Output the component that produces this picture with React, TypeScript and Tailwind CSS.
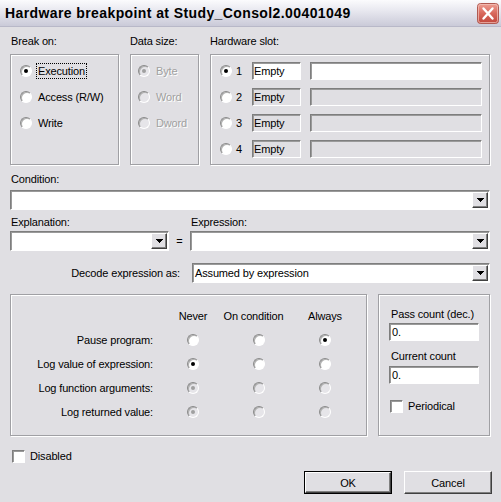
import React from "react";

const sunk =
  "border border-t-[#7e7e7e] border-l-[#7e7e7e] border-b-white border-r-white shadow-[inset_1px_1px_0_#9a9a9a]";
const groupBox =
  "border border-[#a0a0a4] shadow-[inset_1px_1px_0_#fff,1px_1px_0_#fff]";
const raised =
  "bg-[#e0dfe3] border border-t-white border-l-white border-r-[#404040] border-b-[#404040] shadow-[inset_-1px_-1px_0_#808080]";
const disabledText = "text-[#a0a0a0] [text-shadow:1px_1px_0_#fff]";

function Radio({ checked = false, disabled = false }: { checked?: boolean; disabled?: boolean }) {
  return (
    <span
      className={`relative inline-block w-[12px] h-[12px] shrink-0 rounded-full border border-t-[#8a8a8a] border-l-[#8a8a8a] border-r-white border-b-white shadow-[inset_1px_1px_0_#b0b0b0] ${
        disabled ? "bg-[#e6e5e9]" : "bg-white"
      }`}
    >
      {checked && (
        <span
          className={`absolute left-[3px] top-[3px] w-[4px] h-[4px] rounded-full ${
            disabled ? "bg-[#a0a0a0]" : "bg-black"
          }`}
        />
      )}
    </span>
  );
}

function Check() {
  return <span className={`inline-block w-[13px] h-[13px] shrink-0 bg-white ${sunk}`} />;
}

function DropBtn() {
  return (
    <div className={`w-[16px] h-[16px] mr-[1px] shrink-0 flex items-center justify-center ${raised}`}>
      <svg width="7" height="4" viewBox="0 0 7 4" shapeRendering="crispEdges">
        <rect x="0" y="0" width="7" height="1" fill="#000" />
        <rect x="1" y="1" width="5" height="1" fill="#000" />
        <rect x="2" y="2" width="3" height="1" fill="#000" />
        <rect x="3" y="3" width="1" height="1" fill="#000" />
      </svg>
    </div>
  );
}

function Combo({ className = "", text = "" }: { className?: string; text?: string }) {
  return (
    <div className={`${sunk} bg-white h-[20px] flex items-center ${className}`}>
      <span className="flex-1 pl-[2px] whitespace-nowrap overflow-hidden">{text}</span>
      <DropBtn />
    </div>
  );
}

function CloseBtn() {
  return (
    <svg width="22" height="21" viewBox="0 0 22 21">
      <defs>
        <linearGradient id="cg" x1="0" y1="0" x2="0" y2="1">
          <stop offset="0" stopColor="#eea196" />
          <stop offset="0.5" stopColor="#d8685c" />
          <stop offset="1" stopColor="#c0463c" />
        </linearGradient>
      </defs>
      <rect x="0.5" y="0.5" width="21" height="20" rx="3" fill="url(#cg)" stroke="#b05a52" />
      <rect x="1.5" y="1.5" width="19" height="18" rx="2" fill="none" stroke="#f3c4bc" strokeOpacity="0.7" />
      <path d="M6.5 5.5 L15.5 15.5 M15.5 5.5 L6.5 15.5" stroke="#fff" strokeWidth="2.4" strokeLinecap="round" />
    </svg>
  );
}

function SlotRow({ n, active }: { n: number; active: boolean }) {
  const bg = active ? "bg-white" : "bg-[#e0dfe3]";
  return (
    <div className="h-[26px] flex items-center">
      <Radio checked={active} />
      <span className="ml-[4px] w-[16px]">{n}</span>
      <div className={`${sunk} ${bg} w-[49px] h-[18px] flex items-center pl-[1px]`}>Empty</div>
      <div className={`${sunk} ${bg} w-[172px] h-[18px] ml-[9px]`} />
    </div>
  );
}

function OptRow({
  label,
  checked,
  disabled = false,
  focused = false,
}: {
  label: string;
  checked?: boolean;
  disabled?: boolean;
  focused?: boolean;
}) {
  return (
    <div className="h-[26px] flex items-center">
      <Radio checked={checked} disabled={disabled} />
      <span
        className={`ml-[4px] px-[1px] leading-[14px] border border-dotted ${
          focused ? "border-black" : "border-transparent"
        } ${disabled ? disabledText : ""}`}
      >
        {label}
      </span>
    </div>
  );
}

function ActRow({ label, sel, dis }: { label: string; sel: number; dis: boolean }) {
  return (
    <div className="h-[24px] flex items-center">
      <span className="w-[142px] text-right">{label}</span>
      <div className="w-[80px] flex justify-center">
        <Radio checked={sel === 0} disabled={dis} />
      </div>
      <div className="w-[51px] flex justify-center">
        <Radio checked={sel === 1} disabled={dis} />
      </div>
      <div className="w-[82px] flex justify-center">
        <Radio checked={sel === 2} disabled={dis} />
      </div>
    </div>
  );
}

function Button({ label, def = false }: { label: string; def?: boolean }) {
  if (def) {
    return (
      <div className="w-[88px] h-[23px] border border-black flex">
        <div className={`flex-1 flex items-center justify-center ${raised}`}>{label}</div>
      </div>
    );
  }
  return (
    <div className={`w-[88px] h-[23px] flex items-center justify-center ${raised}`}>{label}</div>
  );
}

export default function App() {
  return (
    <div className="w-[501px] h-[502px] bg-[#e0dfe3] font-['Liberation_Sans',Arial,sans-serif] text-[11px] leading-[14px] tracking-[-0.15px] text-black flex flex-col overflow-hidden">
      {/* Title bar */}
      <div className="h-[27px] shrink-0 flex items-center justify-between pl-[5px] pr-[2px] bg-[linear-gradient(180deg,#fbfbfd_0%,#e6e6ee_45%,#cacad8_100%)] border-b border-[#b8b8c8]">
        <span className="font-bold text-[14px] tracking-[0.4px] leading-[16px]">
          Hardware breakpoint at Study_Consol2.00401049
        </span>
        <CloseBtn />
      </div>

      <div className="flex flex-col pl-[10px] pr-[11px]">
        {/* top groups */}
        <div className="flex gap-[11px] pt-[7px]">
          <div className="w-[109px] flex flex-col">
            <span className="pl-[1px] h-[14px]">Break on:</span>
            <div className={`${groupBox} mt-[6px] h-[111px] pl-[9px] pt-[3px] flex flex-col`}>
              <OptRow label="Execution" checked focused />
              <OptRow label="Access (R/W)" />
              <OptRow label="Write" />
            </div>
          </div>
          <div className="w-[69px] flex flex-col">
            <span className="h-[14px]">Data size:</span>
            <div className={`${groupBox} mt-[6px] h-[111px] pl-[7px] pt-[3px] flex flex-col`}>
              <OptRow label="Byte" checked disabled />
              <OptRow label="Word" disabled />
              <OptRow label="Dword" disabled />
            </div>
          </div>
          <div className="w-[280px] flex flex-col">
            <span className="h-[14px]">Hardware slot:</span>
            <div className={`${groupBox} mt-[6px] h-[111px] pl-[9px] pt-[3px] flex flex-col`}>
              <SlotRow n={1} active />
              <SlotRow n={2} active={false} />
              <SlotRow n={3} active={false} />
              <SlotRow n={4} active={false} />
            </div>
          </div>
        </div>

        {/* condition */}
        <span className="mt-[7px] pl-[1px] h-[14px]">Condition:</span>
        <Combo className="mt-[4px] w-[480px]" />

        {/* explanation / expression */}
        <div className="flex mt-[5px]">
          <div className="w-[159px] flex flex-col">
            <span className="pl-[1px] h-[14px]">Explanation:</span>
            <Combo className="mt-[2px] w-[159px]" />
          </div>
          <div className="w-[21px] flex items-end justify-center pb-[3px]">
            <span>=</span>
          </div>
          <div className="w-[300px] flex flex-col">
            <span className="pl-[1px] h-[14px]">Expression:</span>
            <Combo className="mt-[2px] w-[300px]" />
          </div>
        </div>

        {/* decode */}
        <div className="flex items-center mt-[12px]">
          <span className="w-[170px] text-right">Decode expression as:</span>
          <Combo className="ml-[12px] w-[298px]" text="Assumed by expression" />
        </div>

        {/* bottom groups */}
        <div className="flex gap-[11px] mt-[11px]">
          <div className={`${groupBox} w-[357px] h-[142px] pt-[9px] flex flex-col`}>
            <div className="h-[24px] flex items-center">
              <span className="w-[142px]" />
              <div className="w-[80px] flex justify-center whitespace-nowrap">Never</div>
              <div className="w-[51px] flex justify-center whitespace-nowrap pr-[10px]">On condition</div>
              <div className="w-[82px] flex justify-center whitespace-nowrap">Always</div>
            </div>
            <ActRow label="Pause program:" sel={2} dis={false} />
            <ActRow label="Log value of expression:" sel={0} dis={false} />
            <ActRow label="Log function arguments:" sel={0} dis />
            <ActRow label="Log returned value:" sel={0} dis />
          </div>
          <div className={`${groupBox} w-[112px] h-[142px] pl-[10px] pt-[12px] flex flex-col`}>
            <span className="pl-[2px] h-[14px] whitespace-nowrap">Pass count (dec.)</span>
            <div className={`${sunk} bg-white w-[90px] h-[18px] mt-[2px] pl-[2px] flex items-center`}>0.</div>
            <span className="pl-[2px] h-[14px] mt-[8px]">Current count</span>
            <div className={`${sunk} bg-white w-[90px] h-[18px] mt-[3px] pl-[2px] flex items-center`}>0.</div>
            <div className="flex items-center mt-[15px] pl-[1px] h-[14px]">
              <Check />
              <span className="ml-[5px]">Periodical</span>
            </div>
          </div>
        </div>

        {/* disabled */}
        <div className="flex items-center mt-[13px] pl-[2px] h-[14px]">
          <Check />
          <span className="ml-[5px]">Disabled</span>
        </div>

        {/* buttons */}
        <div className="flex justify-end gap-[12px] mt-[8px] mr-[-2px]">
          <Button label="OK" def />
          <Button label="Cancel" />
        </div>
      </div>
    </div>
  );
}
